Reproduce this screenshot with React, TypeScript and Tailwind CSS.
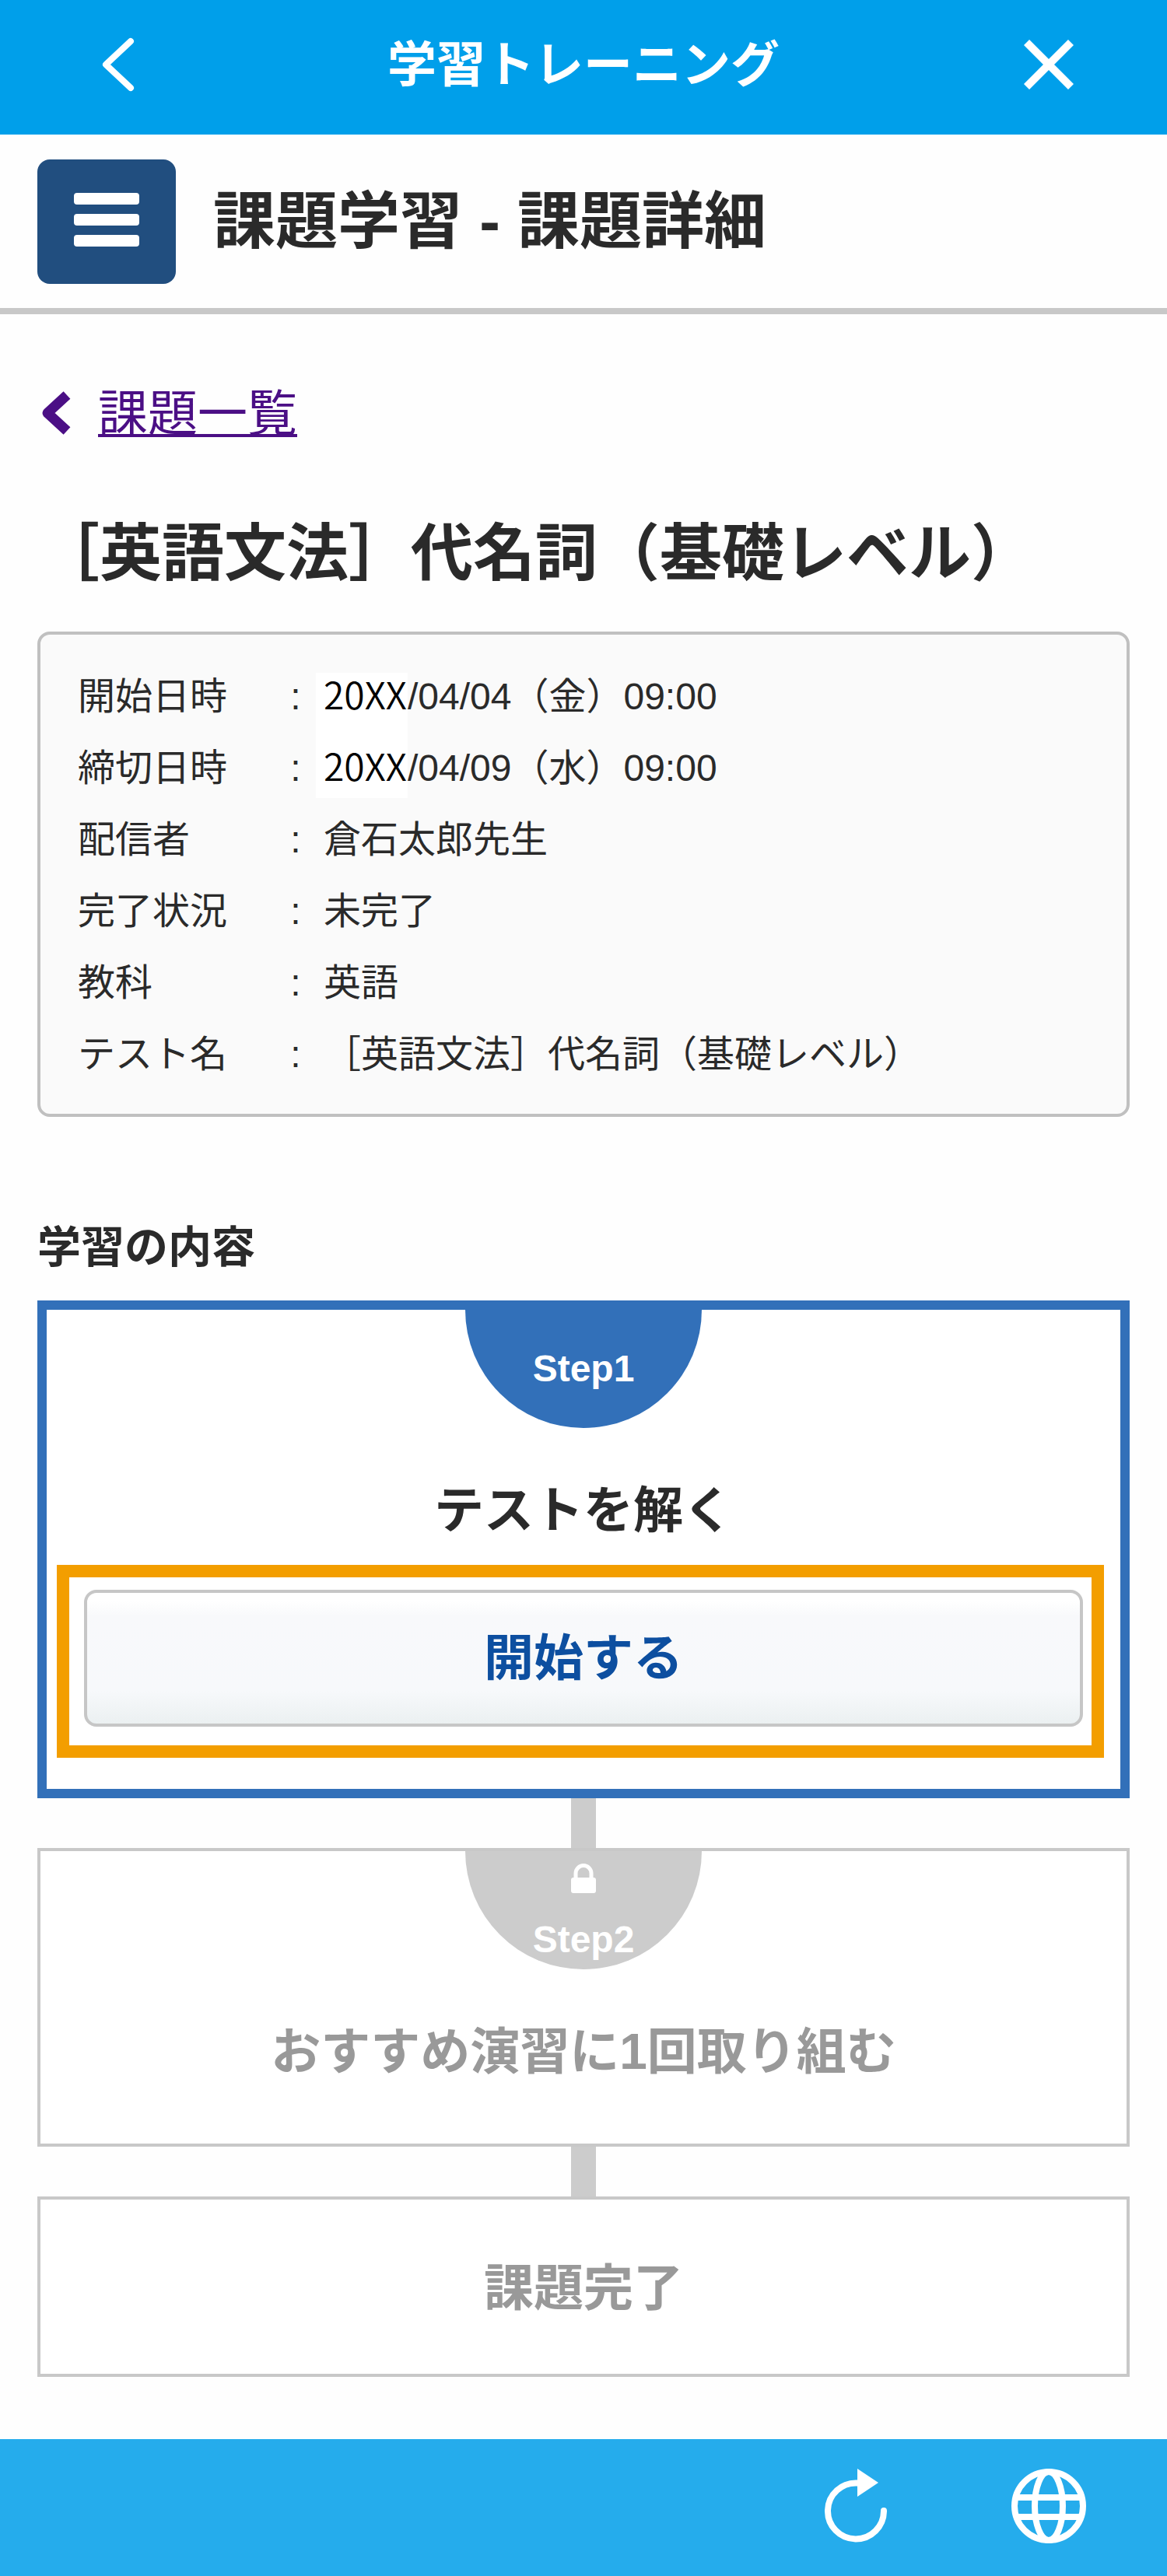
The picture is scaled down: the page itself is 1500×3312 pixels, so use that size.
import { ReactNode } from "react";
import clsx from "clsx";

const details = [
  { label: "開始日時", year: "20XX", value: "/04/04（金）09:00" },
  { label: "締切日時", year: "20XX", value: "/04/09（水）09:00" },
  { label: "配信者", value: "倉石太郎先生" },
  { label: "完了状況", value: "未完了" },
  { label: "教科", value: "英語" },
  { label: "テスト名", value: "［英語文法］代名詞（基礎レベル）" },
];

function Header() {
  return (
    <header className="flex h-[173px] items-center justify-between bg-[#009fea] px-[112px] pb-2 text-white">
      <button type="button" aria-label="戻る" className="grid size-20 place-content-center">
        <svg width="42" height="70" viewBox="0 0 42 70" fill="none" stroke="currentColor" strokeWidth="8" strokeLinecap="round" strokeLinejoin="round">
          <path d="M37 5 5 35l32 30" />
        </svg>
      </button>
      <p className="text-[63px] leading-[80px] font-bold">学習トレーニング</p>
      <button type="button" aria-label="閉じる" className="grid size-20 place-content-center">
        <svg width="64" height="64" viewBox="0 0 64 64" fill="none" stroke="currentColor" strokeWidth="10">
          <path d="M3.5 3.5l57 57M60.5 3.5l-57 57" />
        </svg>
      </button>
    </header>
  );
}

function TitleBar() {
  return (
    <div className="flex h-[231px] items-center gap-12 border-b-8 border-[#c8c8c8] px-12">
      <button type="button" aria-label="メニュー" className="flex h-40 w-[178px] flex-col items-center justify-center gap-3 rounded-2xl bg-[#214e7f] pb-1">
        <span className="h-[15px] w-[84px] rounded-sm bg-white" />
        <span className="h-[15px] w-[84px] rounded-sm bg-white" />
        <span className="h-[15px] w-[84px] rounded-sm bg-white" />
      </button>
      <h1 className="text-[80px] leading-[96px] font-bold">課題学習 - 課題詳細</h1>
    </div>
  );
}

function DetailList() {
  return (
    <div className="relative mt-[52px] rounded-2xl border-4 border-[#c0c0c0] bg-[#fafafa] px-12 pt-[34px] pb-[30px] text-[48px] leading-[92px]">
      <div className="absolute top-[49px] left-[354px] h-[161px] w-[118px] bg-white" />
      <dl className="relative">
        {details.map((i) => (
          <div key={i.label} className="flex">
            <dt className="flex w-[316px] shrink-0">
              <span className="w-64">{i.label}</span>
              <span className="w-12 text-center">:</span>
            </dt>
            <dd>
              {i.year && <span className="inline-block w-[108px] font-['Noto_Sans_CJK_JP',sans-serif] leading-none font-[350] text-black">{i.year}</span>}
              {i.value}
            </dd>
          </div>
        ))}
      </dl>
    </div>
  );
}

function StepCard({ active, badge, title, children }: { active?: boolean; badge?: ReactNode; title: string; children?: ReactNode }) {
  return (
    <li
      className={clsx(
        "flex flex-col items-center bg-white",
        active ? "border-12 border-[#3270b9]" : "border-4 border-[#c8c8c8] text-[#999999]"
      )}
    >
      {badge}
      <h3 className={clsx("text-[64px] leading-[64px] font-bold", badge ? "mt-[74px]" : "mt-[82px] mb-[78px]")}>{title}</h3>
      {children}
    </li>
  );
}

function Connector() {
  return <li aria-hidden="true" className="mx-auto h-16 w-8 bg-[#cccccc]" />;
}

function Footer() {
  return (
    <footer className="flex h-44 items-start justify-end gap-40 bg-[#25acec] pt-[38px] pr-[104px] text-white">
      <button type="button" aria-label="再読み込み">
        <svg width="80" height="96" viewBox="0 0 80 96" fill="none" stroke="currentColor" strokeWidth="8" strokeLinecap="round">
          <path d="M42 18.5A36 36 0 1 0 76 54" />
          <path d="M42 0v36l27-18z" fill="currentColor" stroke="none" />
        </svg>
      </button>
      <button type="button" aria-label="言語">
        <svg width="96" height="96" viewBox="0 0 96 96" fill="none" stroke="currentColor" strokeWidth="8">
          <circle cx="48" cy="48" r="44" />
          <ellipse cx="48" cy="48" rx="18" ry="44" />
          <path d="M7 37h82M7 62h82" />
        </svg>
      </button>
    </footer>
  );
}

export default function App() {
  return (
    <div className="bg-[#fefefe] font-['Liberation_Sans','Noto_Sans_CJK_JP',sans-serif] text-[#2a2a2a]" lang="ja">
      <Header />
      <TitleBar />
      <main className="px-12 pt-24 pb-20">
        <a href="#list" className="flex w-fit items-center gap-8 text-[64px] leading-[64px] text-[#4b0f85]">
          <svg width="46" height="60" viewBox="0 0 46 60" fill="none" stroke="currentColor" strokeWidth="13">
            <path d="M38 6 13 29l25 23" strokeLinejoin="round" />
          </svg>
          <span className="underline decoration-4 underline-offset-4">課題一覧</span>
        </a>
        <h2 className="mt-[100px] text-[80px] leading-[96px] font-bold">［英語文法］代名詞（基礎レベル）</h2>
        <DetailList />

        <h2 className="mt-32 mb-7 text-[56px] leading-[80px] font-bold">学習の内容</h2>
        <ol>
          <StepCard
            active
            title="テストを解く"
            badge={
              <div className="flex h-[152px] w-[304px] items-center justify-center rounded-b-full bg-[#3270b9] text-[48px] leading-[64px] font-bold text-white">
                Step1
              </div>
            }
          >
            <div className="relative mt-[70px] mb-20 w-full px-12">
              <button
                type="button"
                className="h-44 w-full rounded-2xl border-4 border-[#c6c6c6] bg-[linear-gradient(#ffffff_6%,#f8f9fb_18%,#f7f9fb_75%,#ebf0f1)] text-[64px] leading-[80px] font-bold text-[#0d4fa0]"
              >
                開始する
              </button>
              {/* highlight frame */}
              <div className="pointer-events-none absolute -top-8 right-[21px] -bottom-10 left-[13px] border-16 border-[#f39e00]" />
            </div>
          </StepCard>
          <Connector />
          <StepCard
            title="おすすめ演習に1回取り組む"
            badge={
              <div className="flex h-[152px] w-[304px] flex-col items-center justify-between rounded-b-full bg-[#cccccc] pt-4 pb-1.5 text-[48px] leading-[64px] font-bold text-white">
                <svg width="32" height="38" viewBox="0 0 32 38">
                  <path d="M6 20v-7.5a10 10 0 0 1 20 0V20" fill="none" stroke="currentColor" strokeWidth="5" />
                  <rect y="18" width="32" height="20" rx="3" fill="currentColor" />
                </svg>
                Step2
              </div>
            }
          >
            <div className="h-[86px]" />
          </StepCard>
          <Connector />
          <StepCard title="課題完了" />
        </ol>
      </main>
      <Footer />
    </div>
  );
}
